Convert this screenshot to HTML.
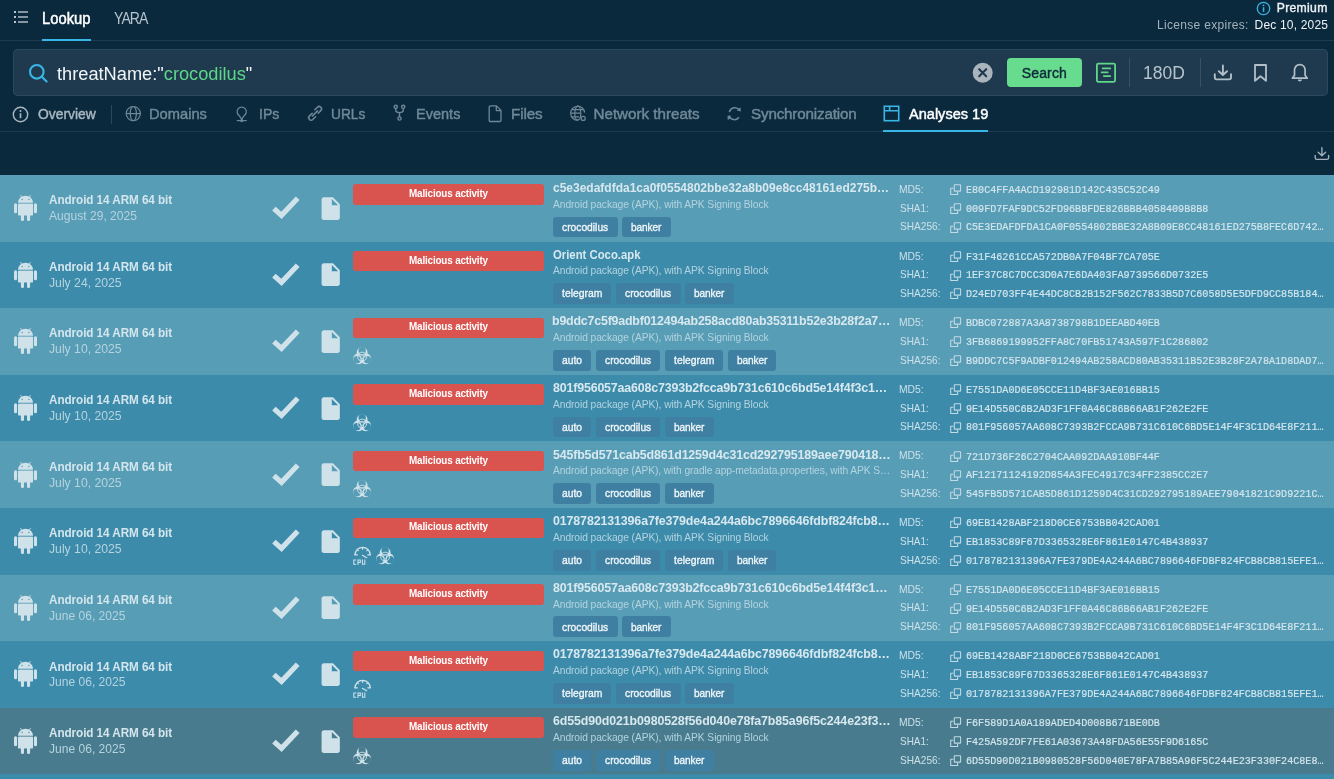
<!DOCTYPE html><html><head><meta charset='utf-8'><style>
html,body{margin:0;padding:0;width:1334px;height:779px;overflow:hidden;background:#0b293d;}
body{position:relative;font-family:'Liberation Sans',sans-serif;}
.t{position:absolute;white-space:pre;}
#w{position:absolute;left:0;top:0;width:1334px;height:779px;will-change:transform;}
svg{overflow:visible}
</style></head><body><div id=w><div style='position:absolute;left:0;top:40px;width:1334px;height:1px;background:#1d3a4e'></div><svg style='position:absolute;left:13px;top:10px' width=16 height=14 viewBox='0 0 16 14'>
<g fill='#b9c6ce'><rect x=1 y=1 width=2 height=2 /><rect x=1 y=6 width=2 height=2 /><rect x=1 y=11 width=2 height=2 />
<rect x=5 y=1.3 width=10 height=1.4 /><rect x=5 y=6.3 width=10 height=1.4 /><rect x=5 y=11.3 width=10 height=1.4 /></g></svg><div class=t style="left:41.60px;top:10.99px;font-size:15.6px;line-height:15.6px;color:#ffffff;-webkit-text-stroke:0.47px currentColor;transform:scaleX(0.948);transform-origin:0 0;">Lookup</div><div class=t style="left:113.80px;top:10.99px;font-size:15.6px;line-height:15.6px;color:#b5c3cc;letter-spacing:-1.037px;transform:scaleX(0.900);transform-origin:0 0;">YARA</div><div style='position:absolute;left:42px;top:39px;width:49px;height:2px;background:#38b6e6'></div><svg style='position:absolute;left:1256px;top:1px' width=15 height=15 viewBox='0 0 15 15'>
<circle cx=7.5 cy=7.5 r=6.2 fill=none stroke='#38b6e6' stroke-width=1.3 /><rect x=6.8 y=6.3 width=1.5 height=4.6 fill='#38b6e6'/><circle cx=7.5 cy=4.4 r=0.9 fill='#38b6e6'/></svg><div class=t style="left:1276.70px;top:1.67px;font-size:12.2px;line-height:12.2px;color:#eef3f6;-webkit-text-stroke:0.37px currentColor;letter-spacing:0.317px;">Premium</div><div class=t style="left:1157.00px;top:19.44px;font-size:12px;line-height:12px;color:#a3b2bc;letter-spacing:0.307px;">License expires:</div><div class=t style="left:1254.60px;top:19.44px;font-size:12px;line-height:12px;color:#eef3f6;letter-spacing:0.182px;">Dec 10, 2025</div><div style='position:absolute;left:13px;top:49px;width:1315px;height:47px;background:#1f3a4f;border-radius:5px;box-shadow:inset 0 0 0 1px #2a4960'></div><svg style='position:absolute;left:27.8px;top:63px' width=21 height=21 viewBox='0 0 21 21'>
<circle cx=8.8 cy=8.8 r=6.8 fill=none stroke='#38b6e6' stroke-width=2.1 /><line x1=13.8 y1=13.8 x2=18.6 y2=18.6 stroke='#38b6e6' stroke-width=2.1 stroke-linecap=round /></svg><div class=t style="left:57.00px;top:65.00px;font-size:18.9px;line-height:18.9px;color:#f2f5f7;transform:scaleX(0.965);transform-origin:0 0;">threatName:"<span style='color:#5fd68a'>crocodilus</span>"</div><svg style='position:absolute;left:972px;top:62px' width=22 height=22 viewBox='0 0 22 22'>
<circle cx=10.7 cy=10.7 r=10 fill='#a9b4bc'/><path d='M7.2 7.2 L14.2 14.2 M14.2 7.2 L7.2 14.2' stroke='#1f3a4f' stroke-width=2.1 stroke-linecap=round /></svg><div style='position:absolute;left:1007px;top:58px;width:75px;height:29px;background:#68dc8e;border-radius:4px'></div><div class=t style="left:1021.70px;top:65.65px;font-size:14px;line-height:14px;color:#0f2b3b;-webkit-text-stroke:0.42px currentColor;letter-spacing:0.160px;">Search</div><svg style='position:absolute;left:1095px;top:62px' width=22 height=22 viewBox='0 0 22 22'>
<rect x=1.9 y=1.6 width=18.2 height=18.2 rx=1.5 fill=none stroke='#5fd68a' stroke-width=1.8 /><path d='M7.6 6.4 H15.3 M6.6 10.3 H12.7 M8.8 14.1 H15.3' stroke='#5fd68a' stroke-width=1.7 stroke-linecap=round /></svg><div style='position:absolute;left:1129px;top:58px;width:1px;height:29px;background:#34506a'></div><div class=t style="left:1142.60px;top:64.20px;font-size:18.9px;line-height:18.9px;color:#b7c3cb;transform:scaleX(0.925);transform-origin:0 0;">180D</div><div style='position:absolute;left:1200px;top:58px;width:1px;height:29px;background:#34506a'></div><svg style='position:absolute;left:1212px;top:64px' width=22 height=19 viewBox='0 0 22 19'>
<path d='M2.8 10.2 V13.6 Q2.8 15.4 4.6 15.4 H17.2 Q19 15.4 19 13.6 V10.2' fill=none stroke='#b2bfc8' stroke-width=1.9 stroke-linecap=round /><path d='M10.9 1.4 V11 M6.8 7.2 L10.9 11 L15 7.2' fill=none stroke='#b2bfc8' stroke-width=1.9 stroke-linecap=round stroke-linejoin=round /></svg><svg style='position:absolute;left:1252px;top:63px' width=17 height=20 viewBox='0 0 17 20'>
<path d='M3 2 H14 V17.8 L8.5 13.2 L3 17.8 Z' fill=none stroke='#b2bfc8' stroke-width=1.8 stroke-linejoin=round /></svg><svg style='position:absolute;left:1290px;top:63px' width=20 height=20 viewBox='0 0 20 20'>
<path d='M9.8 1.6 C6.4 1.6 4.5 4.3 4.5 7.3 V12.3 L2.4 15.2 H17.2 L15.1 12.3 V7.3 C15.1 4.3 13.2 1.6 9.8 1.6 Z' fill=none stroke='#b2bfc8' stroke-width=1.7 stroke-linejoin=round /><path d='M8 17 H11.6 Q9.8 19.4 8 17 Z' fill='#b2bfc8' stroke='#b2bfc8' stroke-width=0.8 /></svg><svg style='position:absolute;left:12px;top:106px' width=18 height=18 viewBox='0 0 18 18'><circle cx=8.5 cy=8.5 r=7.2 fill=none stroke='#aab8c1' stroke-width=1.4 /><rect x=7.7 y=7.2 width=1.6 height=5 fill='#aab8c1'/><circle cx=8.5 cy=5 r=1 fill='#aab8c1'/></svg><div class=t style="left:38.00px;top:106.13px;font-size:15.2px;line-height:15.2px;color:#aab8c1;-webkit-text-stroke:0.46px currentColor;transform:scaleX(0.912);transform-origin:0 0;">Overview</div><div style='position:absolute;left:111px;top:105px;width:1px;height:19px;background:#2c475b'></div><svg style='position:absolute;left:125px;top:105px' width=18 height=18 viewBox='0 0 18 18'><g fill=none stroke='#6f8897' stroke-width=1.2><circle cx=8.3 cy=8.6 r=7.1 /><ellipse cx=8.3 cy=8.6 rx=3.1 ry=7.1 /><path d='M1.2 8.6 H15.4'/></g></svg><div class=t style="left:149.00px;top:106.13px;font-size:15.2px;line-height:15.2px;color:#6f8897;-webkit-text-stroke:0.46px currentColor;transform:scaleX(0.966);transform-origin:0 0;">Domains</div><svg style='position:absolute;left:236px;top:105px' width=12 height=18 viewBox='0 0 12 18'><g fill=none stroke='#6f8897' stroke-width=1.2><path d='M5.7 14.2 L3.2 10.6 A4.6 4.6 0 1 1 8.2 10.6 Z' stroke-linejoin=round /><path d='M0.8 15.6 H10.6'/><circle cx=5.7 cy=15.6 r=1 fill='#6f8897'/></g></svg><div class=t style="left:259.00px;top:106.13px;font-size:15.2px;line-height:15.2px;color:#6f8897;-webkit-text-stroke:0.46px currentColor;transform:scaleX(0.929);transform-origin:0 0;">IPs</div><svg style='position:absolute;left:306px;top:104px' width=18 height=18 viewBox='0 0 18 18'><g fill=none stroke='#6f8897' stroke-width=1.5 stroke-linecap=round><path d='M6.2 9.3 L3.4 12.1 A2.4 2.4 0 0 0 6.8 15.5 L9.6 12.7'/><path d='M8.8 5.8 L11.4 3.2 A2.4 2.4 0 0 1 14.8 6.6 L12.1 9.3'/><path d='M6.5 11.9 L11.5 6.9'/></g></svg><div class=t style="left:330.50px;top:106.13px;font-size:15.2px;line-height:15.2px;color:#6f8897;-webkit-text-stroke:0.46px currentColor;transform:scaleX(0.905);transform-origin:0 0;">URLs</div><svg style='position:absolute;left:393px;top:104px' width=13 height=18 viewBox='0 0 13 18'><g fill=none stroke='#6f8897' stroke-width=1.4><circle cx=2.8 cy=2.8 r=1.6 /><circle cx=10.2 cy=2.8 r=1.6 /><circle cx=6.5 cy=14.5 r=1.6 /><path d='M2.8 4.4 V6.5 Q2.8 8.6 6.5 8.6 Q10.2 8.6 10.2 6.5 V4.4 M6.5 8.6 V12.9'/></g></svg><div class=t style="left:416.00px;top:106.13px;font-size:15.2px;line-height:15.2px;color:#6f8897;-webkit-text-stroke:0.46px currentColor;transform:scaleX(0.956);transform-origin:0 0;">Events</div><svg style='position:absolute;left:488px;top:105px' width=14 height=18 viewBox='0 0 14 18'><path d='M1.2 2.2 Q1.2 0.9 2.5 0.9 H8.5 L13 5.4 V15.2 Q13 16.5 11.7 16.5 H2.5 Q1.2 16.5 1.2 15.2 Z M8.3 1 V5.6 H13' fill=none stroke='#6f8897' stroke-width=1.3 stroke-linejoin=round /></svg><div class=t style="left:511.00px;top:106.13px;font-size:15.2px;line-height:15.2px;color:#6f8897;-webkit-text-stroke:0.46px currentColor;letter-spacing:-0.125px;">Files</div><svg style='position:absolute;left:570px;top:105px' width=18 height=18 viewBox='0 0 18 18'><g fill=none stroke='#6f8897' stroke-width=1.2><path d='M14.6 7.5 A7 7 0 1 0 8 15.2'/><ellipse cx=7.8 cy=8.2 rx=3 ry=7 /><path d='M1 8.2 H10 M1.9 4.6 H13.8 M1.9 11.8 H9'/><circle cx=13.2 cy=13.4 r=2 /></g></svg><div class=t style="left:593.50px;top:106.13px;font-size:15.2px;line-height:15.2px;color:#6f8897;-webkit-text-stroke:0.46px currentColor;letter-spacing:-0.014px;">Network threats</div><svg style='position:absolute;left:727px;top:105px' width=15 height=18 viewBox='0 0 15 18'><g fill=none stroke='#6f8897' stroke-width=1.5><path d='M12.4 5 A5.6 5.6 0 0 0 2.4 7.2'/><path d='M2 10.5 A5.6 5.6 0 0 0 12 12.3'/></g><g fill='#6f8897'><path d='M9.8 5.6 L13.8 6.4 L13.5 2.2 Z'/><path d='M4.5 11.8 L0.5 11 L0.8 15.3 Z'/></g></svg><div class=t style="left:751.00px;top:106.13px;font-size:15.2px;line-height:15.2px;color:#6f8897;-webkit-text-stroke:0.46px currentColor;letter-spacing:-0.171px;">Synchronization</div><svg style='position:absolute;left:883px;top:105px' width=17 height=18 viewBox='0 0 17 18'><g fill=none stroke='#38b6e6' stroke-width=1.6><rect x=1.3 y=1.3 width=14.4 height=14.4 /><path d='M1.3 5.8 H15.7 M6.6 1.3 V5.8'/></g></svg><div class=t style="left:908.50px;top:106.13px;font-size:15.2px;line-height:15.2px;color:#ffffff;-webkit-text-stroke:0.46px currentColor;transform:scaleX(0.958);transform-origin:0 0;">Analyses 19</div><div style='position:absolute;left:0;top:131px;width:1334px;height:1px;background:#1d3a4e'></div><div style='position:absolute;left:883px;top:130px;width:105px;height:2px;background:#38b6e6'></div><svg style='position:absolute;left:1312px;top:145px' width=20 height=17 viewBox='0 0 20 17'>
<path d='M3.2 10.3 V12.7 Q3.2 14.4 4.9 14.4 H14.9 Q16.6 14.4 16.6 12.7 V10.3' fill=none stroke='#a3b3bd' stroke-width=1.35 stroke-linecap=round /><path d='M9.9 2.6 V10.6 M6.2 7.3 L9.9 10.8 L13.6 7.3' fill=none stroke='#a3b3bd' stroke-width=1.35 stroke-linecap=round stroke-linejoin=round /></svg><div style='position:absolute;left:0;top:175px;width:1334px;height:67px;background:#589db6'></div><svg style='position:absolute;left:8px;top:190.00px' width=36 height=36 viewBox='8 190 36 36'><g fill='#cfe2ea'><path d='M18 202.7 A7.5 6.9 0 0 1 33 202.7 Z'/><rect x=18 y=203.8 width=15 height=11.8 rx=1.2 /><rect x=18 y=203.8 width=15 height=6 />
<rect x=14 y=203.2 width=3.1 height=10 rx=1.5 /><rect x=33.9 y=203.2 width=3.1 height=10 rx=1.5 /><rect x=20.9 y=212 width=3.1 height=8.9 rx=1.5 /><rect x=27 y=212 width=3.1 height=8.9 rx=1.5 /></g>
<g stroke='#cfe2ea' stroke-width=0.8 stroke-linecap=round><path d='M20.6 195.3 L21.9 197.6 M30.4 195.3 L29.1 197.6'/></g>
<g fill='#589db6'><circle cx=22.1 cy=199.6 r=0.75 /><circle cx=28.9 cy=199.6 r=0.75 /></g></svg><div class=t style="left:49.00px;top:193.20px;font-size:13px;line-height:13px;color:#d4e6ed;font-weight:700;letter-spacing:-0.067px;transform:scaleX(0.900);transform-origin:0 0;">Android 14 ARM 64 bit</div><div class=t style="left:49.00px;top:209.00px;font-size:13px;line-height:13px;color:#b5d3df;transform:scaleX(0.929);transform-origin:0 0;">August 29, 2025</div><svg style='position:absolute;left:260px;top:175.00px' width=60 height=60 viewBox='260 175 60 60'><path d='M273.9 208.6 L281.5 215.4 L297.7 198.2' fill=none stroke='#cfe2ea' stroke-width=5.2 stroke-linecap=butt stroke-linejoin=miter /></svg><svg style='position:absolute;left:317.1px;top:194.60px' width=27.4 height=27.4 viewBox='0 0 24 24'><path d='M6 2c-1.1 0-1.99.9-1.99 2L4 20c0 1.1.89 2 1.99 2H18c1.1 0 2-.9 2-2V8l-6-6H6zm7 7V3.5L18.5 9H13z' fill='#cfe2ea'/></svg><div style='position:absolute;left:353px;top:184.30px;width:191px;height:20.5px;background:#d9534f;border-radius:3px'></div><div class=t style="left:408.70px;top:188.19px;font-size:11px;line-height:11px;color:#ffffff;font-weight:700;letter-spacing:-0.190px;transform:scaleX(0.900);transform-origin:0 0;">Malicious activity</div><div class=t style="left:553.00px;top:182.00px;font-size:12.4px;line-height:12.4px;color:#d8e8ef;font-weight:700;transform:scaleX(0.968);transform-origin:0 0;">c5e3edafdfda1ca0f0554802bbe32a8b09e8cc48161ed275b…</div><div class=t style="left:553.00px;top:198.75px;font-size:11.4px;line-height:11.4px;color:#b3d3df;letter-spacing:-0.081px;transform:scaleX(0.900);transform-origin:0 0;">Android package (APK), with APK Signing Block</div><div style='position:absolute;left:553px;top:216.60px;width:64.8px;height:20.8px;background:#3f80a2;border-radius:3px'></div><div class=t style="left:562.00px;top:221.72px;font-size:11.2px;line-height:11.2px;color:#f0f6f9;-webkit-text-stroke:0.34px currentColor;transform:scaleX(0.918);transform-origin:0 0;">crocodilus</div><div style='position:absolute;left:622.4px;top:216.60px;width:48.6px;height:20.8px;background:#3f80a2;border-radius:3px'></div><div class=t style="left:631.20px;top:221.72px;font-size:11.2px;line-height:11.2px;color:#f0f6f9;-webkit-text-stroke:0.34px currentColor;letter-spacing:-0.111px;transform:scaleX(0.900);transform-origin:0 0;">banker</div><div class=t style="left:899.00px;top:183.89px;font-size:11px;line-height:11px;color:#cce0e9;transform:scaleX(0.940);transform-origin:0 0;">MD5:</div><svg style='position:absolute;left:949px;top:183.2px' width=13 height=13 viewBox='0 0 13 13'>
<g fill=none stroke='#c3d9e3' stroke-width=1.05><path d='M4.4 5.2 H1.7 V11.5 H8.6 V8.9' stroke-linejoin=round /><rect x=5.3 y=1.8 width=6.3 height=6.3 rx=0.4 /></g></svg><div class=t style="left:966.00px;top:184.99px;font-size:11.8px;line-height:11.8px;color:#d3e5ec;font-family:'Liberation Mono',monospace;transform:scaleX(0.856);transform-origin:0 0;-webkit-text-stroke:0.2px currentColor;">E80C4FFA4ACD192981D142C435C52C49</div><div class=t style="left:900.00px;top:202.64px;font-size:11px;line-height:11px;color:#cce0e9;transform:scaleX(0.903);transform-origin:0 0;">SHA1:</div><svg style='position:absolute;left:949px;top:201.95px' width=13 height=13 viewBox='0 0 13 13'>
<g fill=none stroke='#c3d9e3' stroke-width=1.05><path d='M4.4 5.2 H1.7 V11.5 H8.6 V8.9' stroke-linejoin=round /><rect x=5.3 y=1.8 width=6.3 height=6.3 rx=0.4 /></g></svg><div class=t style="left:966.00px;top:203.74px;font-size:11.8px;line-height:11.8px;color:#d3e5ec;font-family:'Liberation Mono',monospace;transform:scaleX(0.856);transform-origin:0 0;-webkit-text-stroke:0.2px currentColor;">009FD7FAF9DC52FD96BBFDE826BBB4058409B8B8</div><div class=t style="left:900.00px;top:221.39px;font-size:11px;line-height:11px;color:#cce0e9;transform:scaleX(0.919);transform-origin:0 0;">SHA256:</div><svg style='position:absolute;left:949px;top:220.7px' width=13 height=13 viewBox='0 0 13 13'>
<g fill=none stroke='#c3d9e3' stroke-width=1.05><path d='M4.4 5.2 H1.7 V11.5 H8.6 V8.9' stroke-linejoin=round /><rect x=5.3 y=1.8 width=6.3 height=6.3 rx=0.4 /></g></svg><div class=t style="left:966.00px;top:222.49px;font-size:11.8px;line-height:11.8px;color:#d3e5ec;font-family:'Liberation Mono',monospace;transform:scaleX(0.856);transform-origin:0 0;-webkit-text-stroke:0.2px currentColor;">C5E3EDAFDFDA1CA0F0554802BBE32A8B09E8CC48161ED275B8FEC6D742…</div><div style='position:absolute;left:0;top:242px;width:1334px;height:66px;background:#3c8bab'></div><svg style='position:absolute;left:8px;top:256.64px' width=36 height=36 viewBox='8 190 36 36'><g fill='#cfe2ea'><path d='M18 202.7 A7.5 6.9 0 0 1 33 202.7 Z'/><rect x=18 y=203.8 width=15 height=11.8 rx=1.2 /><rect x=18 y=203.8 width=15 height=6 />
<rect x=14 y=203.2 width=3.1 height=10 rx=1.5 /><rect x=33.9 y=203.2 width=3.1 height=10 rx=1.5 /><rect x=20.9 y=212 width=3.1 height=8.9 rx=1.5 /><rect x=27 y=212 width=3.1 height=8.9 rx=1.5 /></g>
<g stroke='#cfe2ea' stroke-width=0.8 stroke-linecap=round><path d='M20.6 195.3 L21.9 197.6 M30.4 195.3 L29.1 197.6'/></g>
<g fill='#589db6'><circle cx=22.1 cy=199.6 r=0.75 /><circle cx=28.9 cy=199.6 r=0.75 /></g></svg><div class=t style="left:49.00px;top:259.84px;font-size:13px;line-height:13px;color:#d4e6ed;font-weight:700;letter-spacing:-0.067px;transform:scaleX(0.900);transform-origin:0 0;">Android 14 ARM 64 bit</div><div class=t style="left:49.00px;top:275.64px;font-size:13px;line-height:13px;color:#b5d3df;transform:scaleX(0.939);transform-origin:0 0;">July 24, 2025</div><svg style='position:absolute;left:260px;top:241.64px' width=60 height=60 viewBox='260 175 60 60'><path d='M273.9 208.6 L281.5 215.4 L297.7 198.2' fill=none stroke='#cfe2ea' stroke-width=5.2 stroke-linecap=butt stroke-linejoin=miter /></svg><svg style='position:absolute;left:317.1px;top:261.24px' width=27.4 height=27.4 viewBox='0 0 24 24'><path d='M6 2c-1.1 0-1.99.9-1.99 2L4 20c0 1.1.89 2 1.99 2H18c1.1 0 2-.9 2-2V8l-6-6H6zm7 7V3.5L18.5 9H13z' fill='#cfe2ea'/></svg><div style='position:absolute;left:353px;top:250.94px;width:191px;height:20.5px;background:#d9534f;border-radius:3px'></div><div class=t style="left:408.70px;top:254.83px;font-size:11px;line-height:11px;color:#ffffff;font-weight:700;letter-spacing:-0.190px;transform:scaleX(0.900);transform-origin:0 0;">Malicious activity</div><div class=t style="left:553.00px;top:248.64px;font-size:12.4px;line-height:12.4px;color:#d8e8ef;font-weight:700;transform:scaleX(0.914);transform-origin:0 0;">Orient Coco.apk</div><div class=t style="left:553.00px;top:265.39px;font-size:11.4px;line-height:11.4px;color:#b3d3df;letter-spacing:-0.081px;transform:scaleX(0.900);transform-origin:0 0;">Android package (APK), with APK Signing Block</div><div style='position:absolute;left:553px;top:283.24px;width:58.2px;height:20.8px;background:#3f80a2;border-radius:3px'></div><div class=t style="left:562.20px;top:288.36px;font-size:11.2px;line-height:11.2px;color:#f0f6f9;-webkit-text-stroke:0.34px currentColor;transform:scaleX(0.926);transform-origin:0 0;">telegram</div><div style='position:absolute;left:615.8px;top:283.24px;width:64.8px;height:20.8px;background:#3f80a2;border-radius:3px'></div><div class=t style="left:624.80px;top:288.36px;font-size:11.2px;line-height:11.2px;color:#f0f6f9;-webkit-text-stroke:0.34px currentColor;transform:scaleX(0.918);transform-origin:0 0;">crocodilus</div><div style='position:absolute;left:685.1999999999999px;top:283.24px;width:48.6px;height:20.8px;background:#3f80a2;border-radius:3px'></div><div class=t style="left:694.00px;top:288.36px;font-size:11.2px;line-height:11.2px;color:#f0f6f9;-webkit-text-stroke:0.34px currentColor;letter-spacing:-0.111px;transform:scaleX(0.900);transform-origin:0 0;">banker</div><div class=t style="left:899.00px;top:250.53px;font-size:11px;line-height:11px;color:#cce0e9;transform:scaleX(0.940);transform-origin:0 0;">MD5:</div><svg style='position:absolute;left:949px;top:249.84px' width=13 height=13 viewBox='0 0 13 13'>
<g fill=none stroke='#c3d9e3' stroke-width=1.05><path d='M4.4 5.2 H1.7 V11.5 H8.6 V8.9' stroke-linejoin=round /><rect x=5.3 y=1.8 width=6.3 height=6.3 rx=0.4 /></g></svg><div class=t style="left:966.00px;top:251.63px;font-size:11.8px;line-height:11.8px;color:#d3e5ec;font-family:'Liberation Mono',monospace;transform:scaleX(0.856);transform-origin:0 0;-webkit-text-stroke:0.2px currentColor;">F31F46261CCA572DB0A7F04BF7CA705E</div><div class=t style="left:900.00px;top:269.28px;font-size:11px;line-height:11px;color:#cce0e9;transform:scaleX(0.903);transform-origin:0 0;">SHA1:</div><svg style='position:absolute;left:949px;top:268.59px' width=13 height=13 viewBox='0 0 13 13'>
<g fill=none stroke='#c3d9e3' stroke-width=1.05><path d='M4.4 5.2 H1.7 V11.5 H8.6 V8.9' stroke-linejoin=round /><rect x=5.3 y=1.8 width=6.3 height=6.3 rx=0.4 /></g></svg><div class=t style="left:966.00px;top:270.38px;font-size:11.8px;line-height:11.8px;color:#d3e5ec;font-family:'Liberation Mono',monospace;transform:scaleX(0.856);transform-origin:0 0;-webkit-text-stroke:0.2px currentColor;">1EF37C8C7DCC3D0A7E6DA403FA9739566D0732E5</div><div class=t style="left:900.00px;top:288.03px;font-size:11px;line-height:11px;color:#cce0e9;transform:scaleX(0.919);transform-origin:0 0;">SHA256:</div><svg style='position:absolute;left:949px;top:287.34px' width=13 height=13 viewBox='0 0 13 13'>
<g fill=none stroke='#c3d9e3' stroke-width=1.05><path d='M4.4 5.2 H1.7 V11.5 H8.6 V8.9' stroke-linejoin=round /><rect x=5.3 y=1.8 width=6.3 height=6.3 rx=0.4 /></g></svg><div class=t style="left:966.00px;top:289.13px;font-size:11.8px;line-height:11.8px;color:#d3e5ec;font-family:'Liberation Mono',monospace;transform:scaleX(0.856);transform-origin:0 0;-webkit-text-stroke:0.2px currentColor;">D24ED703FF4E44DC8CB2B152F562C7833B5D7C6058D5E5DFD9CC85B184…</div><div style='position:absolute;left:0;top:308px;width:1334px;height:67px;background:#589db6'></div><svg style='position:absolute;left:8px;top:323.28px' width=36 height=36 viewBox='8 190 36 36'><g fill='#cfe2ea'><path d='M18 202.7 A7.5 6.9 0 0 1 33 202.7 Z'/><rect x=18 y=203.8 width=15 height=11.8 rx=1.2 /><rect x=18 y=203.8 width=15 height=6 />
<rect x=14 y=203.2 width=3.1 height=10 rx=1.5 /><rect x=33.9 y=203.2 width=3.1 height=10 rx=1.5 /><rect x=20.9 y=212 width=3.1 height=8.9 rx=1.5 /><rect x=27 y=212 width=3.1 height=8.9 rx=1.5 /></g>
<g stroke='#cfe2ea' stroke-width=0.8 stroke-linecap=round><path d='M20.6 195.3 L21.9 197.6 M30.4 195.3 L29.1 197.6'/></g>
<g fill='#589db6'><circle cx=22.1 cy=199.6 r=0.75 /><circle cx=28.9 cy=199.6 r=0.75 /></g></svg><div class=t style="left:49.00px;top:326.48px;font-size:13px;line-height:13px;color:#d4e6ed;font-weight:700;letter-spacing:-0.067px;transform:scaleX(0.900);transform-origin:0 0;">Android 14 ARM 64 bit</div><div class=t style="left:49.00px;top:342.28px;font-size:13px;line-height:13px;color:#b5d3df;transform:scaleX(0.939);transform-origin:0 0;">July 10, 2025</div><svg style='position:absolute;left:260px;top:308.28px' width=60 height=60 viewBox='260 175 60 60'><path d='M273.9 208.6 L281.5 215.4 L297.7 198.2' fill=none stroke='#cfe2ea' stroke-width=5.2 stroke-linecap=butt stroke-linejoin=miter /></svg><svg style='position:absolute;left:317.1px;top:327.88px' width=27.4 height=27.4 viewBox='0 0 24 24'><path d='M6 2c-1.1 0-1.99.9-1.99 2L4 20c0 1.1.89 2 1.99 2H18c1.1 0 2-.9 2-2V8l-6-6H6zm7 7V3.5L18.5 9H13z' fill='#cfe2ea'/></svg><div style='position:absolute;left:353px;top:317.58px;width:191px;height:20.5px;background:#d9534f;border-radius:3px'></div><div class=t style="left:408.70px;top:321.47px;font-size:11px;line-height:11px;color:#ffffff;font-weight:700;letter-spacing:-0.190px;transform:scaleX(0.900);transform-origin:0 0;">Malicious activity</div><svg style='position:absolute;left:352.77px;top:347.01px' width='18.25' height='17.34' viewBox='-25 -26.5 50 47.5'>
<defs><mask id='bio1' maskUnits='userSpaceOnUse' x='-30' y='-30' width='60' height='60'><rect x='-30' y='-30' width='60' height='60' fill='white' /><circle cx='0.00' cy='-16.50' r='10' fill='black' /><circle cx='14.29' cy='8.25' r='10' fill='black' /><circle cx='-14.29' cy='8.25' r='10' fill='black' /><circle cx='0' cy='0' r='3' fill='black' /><line x1='0' y1='0' x2='0.00' y2='9.00' stroke='black' stroke-width='1.6' /><line x1='0' y1='0' x2='-7.79' y2='-4.50' stroke='black' stroke-width='1.6' /><line x1='0' y1='0' x2='7.79' y2='-4.50' stroke='black' stroke-width='1.6' /></mask>
<mask id='bio1r' maskUnits='userSpaceOnUse' x='-30' y='-30' width='60' height='60'><rect x='-30' y='-30' width='60' height='60' fill='white' /><circle cx='0' cy='0' r='3' fill='black' /><line x1='0' y1='0' x2='0.00' y2='9.00' stroke='black' stroke-width='1.6' /><line x1='0' y1='0' x2='-7.79' y2='-4.50' stroke='black' stroke-width='1.6' /><line x1='0' y1='0' x2='7.79' y2='-4.50' stroke='black' stroke-width='1.6' /></mask></defs>
<g fill='#cfe2ea' mask='url(#bio1)'><circle cx='0.00' cy='-11.00' r='15' /><circle cx='9.53' cy='5.50' r='15' /><circle cx='-9.53' cy='5.50' r='15' /></g>
<circle cx='0' cy='0' r='12.3' fill='none' stroke='#cfe2ea' stroke-width='2.6' mask='url(#bio1r)' /></svg><div class=t style="left:552.00px;top:315.28px;font-size:12.4px;line-height:12.4px;color:#d8e8ef;font-weight:700;letter-spacing:-0.192px;">b9ddc7c5f9adbf012494ab258acd80ab35311b52e3b28f2a7…</div><div class=t style="left:553.00px;top:332.03px;font-size:11.4px;line-height:11.4px;color:#b3d3df;letter-spacing:-0.081px;transform:scaleX(0.900);transform-origin:0 0;">Android package (APK), with APK Signing Block</div><div style='position:absolute;left:553px;top:349.88px;width:38px;height:20.8px;background:#3f80a2;border-radius:3px'></div><div class=t style="left:561.90px;top:355.00px;font-size:11.2px;line-height:11.2px;color:#f0f6f9;-webkit-text-stroke:0.34px currentColor;transform:scaleX(0.918);transform-origin:0 0;">auto</div><div style='position:absolute;left:595.6px;top:349.88px;width:64.8px;height:20.8px;background:#3f80a2;border-radius:3px'></div><div class=t style="left:604.60px;top:355.00px;font-size:11.2px;line-height:11.2px;color:#f0f6f9;-webkit-text-stroke:0.34px currentColor;transform:scaleX(0.918);transform-origin:0 0;">crocodilus</div><div style='position:absolute;left:665.0px;top:349.88px;width:58.2px;height:20.8px;background:#3f80a2;border-radius:3px'></div><div class=t style="left:674.20px;top:355.00px;font-size:11.2px;line-height:11.2px;color:#f0f6f9;-webkit-text-stroke:0.34px currentColor;transform:scaleX(0.926);transform-origin:0 0;">telegram</div><div style='position:absolute;left:727.8px;top:349.88px;width:48.6px;height:20.8px;background:#3f80a2;border-radius:3px'></div><div class=t style="left:736.60px;top:355.00px;font-size:11.2px;line-height:11.2px;color:#f0f6f9;-webkit-text-stroke:0.34px currentColor;letter-spacing:-0.111px;transform:scaleX(0.900);transform-origin:0 0;">banker</div><div class=t style="left:899.00px;top:317.17px;font-size:11px;line-height:11px;color:#cce0e9;transform:scaleX(0.940);transform-origin:0 0;">MD5:</div><svg style='position:absolute;left:949px;top:316.48px' width=13 height=13 viewBox='0 0 13 13'>
<g fill=none stroke='#c3d9e3' stroke-width=1.05><path d='M4.4 5.2 H1.7 V11.5 H8.6 V8.9' stroke-linejoin=round /><rect x=5.3 y=1.8 width=6.3 height=6.3 rx=0.4 /></g></svg><div class=t style="left:966.00px;top:318.27px;font-size:11.8px;line-height:11.8px;color:#d3e5ec;font-family:'Liberation Mono',monospace;transform:scaleX(0.856);transform-origin:0 0;-webkit-text-stroke:0.2px currentColor;">BDBC072887A3A8738798B1DEEABD40EB</div><div class=t style="left:900.00px;top:335.92px;font-size:11px;line-height:11px;color:#cce0e9;transform:scaleX(0.903);transform-origin:0 0;">SHA1:</div><svg style='position:absolute;left:949px;top:335.23px' width=13 height=13 viewBox='0 0 13 13'>
<g fill=none stroke='#c3d9e3' stroke-width=1.05><path d='M4.4 5.2 H1.7 V11.5 H8.6 V8.9' stroke-linejoin=round /><rect x=5.3 y=1.8 width=6.3 height=6.3 rx=0.4 /></g></svg><div class=t style="left:966.00px;top:337.02px;font-size:11.8px;line-height:11.8px;color:#d3e5ec;font-family:'Liberation Mono',monospace;transform:scaleX(0.856);transform-origin:0 0;-webkit-text-stroke:0.2px currentColor;">3FB6869199952FFA8C70FB51743A597F1C286802</div><div class=t style="left:900.00px;top:354.67px;font-size:11px;line-height:11px;color:#cce0e9;transform:scaleX(0.919);transform-origin:0 0;">SHA256:</div><svg style='position:absolute;left:949px;top:353.98px' width=13 height=13 viewBox='0 0 13 13'>
<g fill=none stroke='#c3d9e3' stroke-width=1.05><path d='M4.4 5.2 H1.7 V11.5 H8.6 V8.9' stroke-linejoin=round /><rect x=5.3 y=1.8 width=6.3 height=6.3 rx=0.4 /></g></svg><div class=t style="left:966.00px;top:355.77px;font-size:11.8px;line-height:11.8px;color:#d3e5ec;font-family:'Liberation Mono',monospace;transform:scaleX(0.856);transform-origin:0 0;-webkit-text-stroke:0.2px currentColor;">B9DDC7C5F9ADBF012494AB258ACD80AB35311B52E3B28F2A78A1D8DAD7…</div><div style='position:absolute;left:0;top:375px;width:1334px;height:66px;background:#3c8bab'></div><svg style='position:absolute;left:8px;top:389.92px' width=36 height=36 viewBox='8 190 36 36'><g fill='#cfe2ea'><path d='M18 202.7 A7.5 6.9 0 0 1 33 202.7 Z'/><rect x=18 y=203.8 width=15 height=11.8 rx=1.2 /><rect x=18 y=203.8 width=15 height=6 />
<rect x=14 y=203.2 width=3.1 height=10 rx=1.5 /><rect x=33.9 y=203.2 width=3.1 height=10 rx=1.5 /><rect x=20.9 y=212 width=3.1 height=8.9 rx=1.5 /><rect x=27 y=212 width=3.1 height=8.9 rx=1.5 /></g>
<g stroke='#cfe2ea' stroke-width=0.8 stroke-linecap=round><path d='M20.6 195.3 L21.9 197.6 M30.4 195.3 L29.1 197.6'/></g>
<g fill='#589db6'><circle cx=22.1 cy=199.6 r=0.75 /><circle cx=28.9 cy=199.6 r=0.75 /></g></svg><div class=t style="left:49.00px;top:393.12px;font-size:13px;line-height:13px;color:#d4e6ed;font-weight:700;letter-spacing:-0.067px;transform:scaleX(0.900);transform-origin:0 0;">Android 14 ARM 64 bit</div><div class=t style="left:49.00px;top:408.92px;font-size:13px;line-height:13px;color:#b5d3df;transform:scaleX(0.939);transform-origin:0 0;">July 10, 2025</div><svg style='position:absolute;left:260px;top:374.92px' width=60 height=60 viewBox='260 175 60 60'><path d='M273.9 208.6 L281.5 215.4 L297.7 198.2' fill=none stroke='#cfe2ea' stroke-width=5.2 stroke-linecap=butt stroke-linejoin=miter /></svg><svg style='position:absolute;left:317.1px;top:394.52px' width=27.4 height=27.4 viewBox='0 0 24 24'><path d='M6 2c-1.1 0-1.99.9-1.99 2L4 20c0 1.1.89 2 1.99 2H18c1.1 0 2-.9 2-2V8l-6-6H6zm7 7V3.5L18.5 9H13z' fill='#cfe2ea'/></svg><div style='position:absolute;left:353px;top:384.22px;width:191px;height:20.5px;background:#d9534f;border-radius:3px'></div><div class=t style="left:408.70px;top:388.11px;font-size:11px;line-height:11px;color:#ffffff;font-weight:700;letter-spacing:-0.190px;transform:scaleX(0.900);transform-origin:0 0;">Malicious activity</div><svg style='position:absolute;left:352.77px;top:413.65px' width='18.25' height='17.34' viewBox='-25 -26.5 50 47.5'>
<defs><mask id='bio2' maskUnits='userSpaceOnUse' x='-30' y='-30' width='60' height='60'><rect x='-30' y='-30' width='60' height='60' fill='white' /><circle cx='0.00' cy='-16.50' r='10' fill='black' /><circle cx='14.29' cy='8.25' r='10' fill='black' /><circle cx='-14.29' cy='8.25' r='10' fill='black' /><circle cx='0' cy='0' r='3' fill='black' /><line x1='0' y1='0' x2='0.00' y2='9.00' stroke='black' stroke-width='1.6' /><line x1='0' y1='0' x2='-7.79' y2='-4.50' stroke='black' stroke-width='1.6' /><line x1='0' y1='0' x2='7.79' y2='-4.50' stroke='black' stroke-width='1.6' /></mask>
<mask id='bio2r' maskUnits='userSpaceOnUse' x='-30' y='-30' width='60' height='60'><rect x='-30' y='-30' width='60' height='60' fill='white' /><circle cx='0' cy='0' r='3' fill='black' /><line x1='0' y1='0' x2='0.00' y2='9.00' stroke='black' stroke-width='1.6' /><line x1='0' y1='0' x2='-7.79' y2='-4.50' stroke='black' stroke-width='1.6' /><line x1='0' y1='0' x2='7.79' y2='-4.50' stroke='black' stroke-width='1.6' /></mask></defs>
<g fill='#cfe2ea' mask='url(#bio2)'><circle cx='0.00' cy='-11.00' r='15' /><circle cx='9.53' cy='5.50' r='15' /><circle cx='-9.53' cy='5.50' r='15' /></g>
<circle cx='0' cy='0' r='12.3' fill='none' stroke='#cfe2ea' stroke-width='2.6' mask='url(#bio2r)' /></svg><div class=t style="left:553.00px;top:381.92px;font-size:12.4px;line-height:12.4px;color:#d8e8ef;font-weight:700;letter-spacing:-0.155px;">801f956057aa608c7393b2fcca9b731c610c6bd5e14f4f3c1…</div><div class=t style="left:553.00px;top:398.67px;font-size:11.4px;line-height:11.4px;color:#b3d3df;letter-spacing:-0.081px;transform:scaleX(0.900);transform-origin:0 0;">Android package (APK), with APK Signing Block</div><div style='position:absolute;left:553px;top:416.52px;width:38px;height:20.8px;background:#3f80a2;border-radius:3px'></div><div class=t style="left:561.90px;top:421.64px;font-size:11.2px;line-height:11.2px;color:#f0f6f9;-webkit-text-stroke:0.34px currentColor;transform:scaleX(0.918);transform-origin:0 0;">auto</div><div style='position:absolute;left:595.6px;top:416.52px;width:64.8px;height:20.8px;background:#3f80a2;border-radius:3px'></div><div class=t style="left:604.60px;top:421.64px;font-size:11.2px;line-height:11.2px;color:#f0f6f9;-webkit-text-stroke:0.34px currentColor;transform:scaleX(0.918);transform-origin:0 0;">crocodilus</div><div style='position:absolute;left:665.0px;top:416.52px;width:48.6px;height:20.8px;background:#3f80a2;border-radius:3px'></div><div class=t style="left:673.80px;top:421.64px;font-size:11.2px;line-height:11.2px;color:#f0f6f9;-webkit-text-stroke:0.34px currentColor;letter-spacing:-0.111px;transform:scaleX(0.900);transform-origin:0 0;">banker</div><div class=t style="left:899.00px;top:383.81px;font-size:11px;line-height:11px;color:#cce0e9;transform:scaleX(0.940);transform-origin:0 0;">MD5:</div><svg style='position:absolute;left:949px;top:383.12px' width=13 height=13 viewBox='0 0 13 13'>
<g fill=none stroke='#c3d9e3' stroke-width=1.05><path d='M4.4 5.2 H1.7 V11.5 H8.6 V8.9' stroke-linejoin=round /><rect x=5.3 y=1.8 width=6.3 height=6.3 rx=0.4 /></g></svg><div class=t style="left:966.00px;top:384.91px;font-size:11.8px;line-height:11.8px;color:#d3e5ec;font-family:'Liberation Mono',monospace;transform:scaleX(0.856);transform-origin:0 0;-webkit-text-stroke:0.2px currentColor;">E7551DA0D6E05CCE11D4BF3AE016BB15</div><div class=t style="left:900.00px;top:402.56px;font-size:11px;line-height:11px;color:#cce0e9;transform:scaleX(0.903);transform-origin:0 0;">SHA1:</div><svg style='position:absolute;left:949px;top:401.87px' width=13 height=13 viewBox='0 0 13 13'>
<g fill=none stroke='#c3d9e3' stroke-width=1.05><path d='M4.4 5.2 H1.7 V11.5 H8.6 V8.9' stroke-linejoin=round /><rect x=5.3 y=1.8 width=6.3 height=6.3 rx=0.4 /></g></svg><div class=t style="left:966.00px;top:403.66px;font-size:11.8px;line-height:11.8px;color:#d3e5ec;font-family:'Liberation Mono',monospace;transform:scaleX(0.856);transform-origin:0 0;-webkit-text-stroke:0.2px currentColor;">9E14D550C6B2AD3F1FF0A46C86B66AB1F262E2FE</div><div class=t style="left:900.00px;top:421.31px;font-size:11px;line-height:11px;color:#cce0e9;transform:scaleX(0.919);transform-origin:0 0;">SHA256:</div><svg style='position:absolute;left:949px;top:420.62px' width=13 height=13 viewBox='0 0 13 13'>
<g fill=none stroke='#c3d9e3' stroke-width=1.05><path d='M4.4 5.2 H1.7 V11.5 H8.6 V8.9' stroke-linejoin=round /><rect x=5.3 y=1.8 width=6.3 height=6.3 rx=0.4 /></g></svg><div class=t style="left:966.00px;top:422.41px;font-size:11.8px;line-height:11.8px;color:#d3e5ec;font-family:'Liberation Mono',monospace;transform:scaleX(0.856);transform-origin:0 0;-webkit-text-stroke:0.2px currentColor;">801F956057AA608C7393B2FCCA9B731C610C6BD5E14F4F3C1D64E8F211…</div><div style='position:absolute;left:0;top:441px;width:1334px;height:67px;background:#589db6'></div><svg style='position:absolute;left:8px;top:456.56px' width=36 height=36 viewBox='8 190 36 36'><g fill='#cfe2ea'><path d='M18 202.7 A7.5 6.9 0 0 1 33 202.7 Z'/><rect x=18 y=203.8 width=15 height=11.8 rx=1.2 /><rect x=18 y=203.8 width=15 height=6 />
<rect x=14 y=203.2 width=3.1 height=10 rx=1.5 /><rect x=33.9 y=203.2 width=3.1 height=10 rx=1.5 /><rect x=20.9 y=212 width=3.1 height=8.9 rx=1.5 /><rect x=27 y=212 width=3.1 height=8.9 rx=1.5 /></g>
<g stroke='#cfe2ea' stroke-width=0.8 stroke-linecap=round><path d='M20.6 195.3 L21.9 197.6 M30.4 195.3 L29.1 197.6'/></g>
<g fill='#589db6'><circle cx=22.1 cy=199.6 r=0.75 /><circle cx=28.9 cy=199.6 r=0.75 /></g></svg><div class=t style="left:49.00px;top:459.76px;font-size:13px;line-height:13px;color:#d4e6ed;font-weight:700;letter-spacing:-0.067px;transform:scaleX(0.900);transform-origin:0 0;">Android 14 ARM 64 bit</div><div class=t style="left:49.00px;top:475.56px;font-size:13px;line-height:13px;color:#b5d3df;transform:scaleX(0.939);transform-origin:0 0;">July 10, 2025</div><svg style='position:absolute;left:260px;top:441.56px' width=60 height=60 viewBox='260 175 60 60'><path d='M273.9 208.6 L281.5 215.4 L297.7 198.2' fill=none stroke='#cfe2ea' stroke-width=5.2 stroke-linecap=butt stroke-linejoin=miter /></svg><svg style='position:absolute;left:317.1px;top:461.16px' width=27.4 height=27.4 viewBox='0 0 24 24'><path d='M6 2c-1.1 0-1.99.9-1.99 2L4 20c0 1.1.89 2 1.99 2H18c1.1 0 2-.9 2-2V8l-6-6H6zm7 7V3.5L18.5 9H13z' fill='#cfe2ea'/></svg><div style='position:absolute;left:353px;top:450.86px;width:191px;height:20.5px;background:#d9534f;border-radius:3px'></div><div class=t style="left:408.70px;top:454.75px;font-size:11px;line-height:11px;color:#ffffff;font-weight:700;letter-spacing:-0.190px;transform:scaleX(0.900);transform-origin:0 0;">Malicious activity</div><svg style='position:absolute;left:352.77px;top:480.29px' width='18.25' height='17.34' viewBox='-25 -26.5 50 47.5'>
<defs><mask id='bio3' maskUnits='userSpaceOnUse' x='-30' y='-30' width='60' height='60'><rect x='-30' y='-30' width='60' height='60' fill='white' /><circle cx='0.00' cy='-16.50' r='10' fill='black' /><circle cx='14.29' cy='8.25' r='10' fill='black' /><circle cx='-14.29' cy='8.25' r='10' fill='black' /><circle cx='0' cy='0' r='3' fill='black' /><line x1='0' y1='0' x2='0.00' y2='9.00' stroke='black' stroke-width='1.6' /><line x1='0' y1='0' x2='-7.79' y2='-4.50' stroke='black' stroke-width='1.6' /><line x1='0' y1='0' x2='7.79' y2='-4.50' stroke='black' stroke-width='1.6' /></mask>
<mask id='bio3r' maskUnits='userSpaceOnUse' x='-30' y='-30' width='60' height='60'><rect x='-30' y='-30' width='60' height='60' fill='white' /><circle cx='0' cy='0' r='3' fill='black' /><line x1='0' y1='0' x2='0.00' y2='9.00' stroke='black' stroke-width='1.6' /><line x1='0' y1='0' x2='-7.79' y2='-4.50' stroke='black' stroke-width='1.6' /><line x1='0' y1='0' x2='7.79' y2='-4.50' stroke='black' stroke-width='1.6' /></mask></defs>
<g fill='#cfe2ea' mask='url(#bio3)'><circle cx='0.00' cy='-11.00' r='15' /><circle cx='9.53' cy='5.50' r='15' /><circle cx='-9.53' cy='5.50' r='15' /></g>
<circle cx='0' cy='0' r='12.3' fill='none' stroke='#cfe2ea' stroke-width='2.6' mask='url(#bio3r)' /></svg><div class=t style="left:553.00px;top:448.56px;font-size:12.4px;line-height:12.4px;color:#d8e8ef;font-weight:700;letter-spacing:-0.154px;">545fb5d571cab5d861d1259d4c31cd292795189aee790418…</div><div class=t style="left:553.00px;top:465.31px;font-size:11.4px;line-height:11.4px;color:#b3d3df;letter-spacing:-0.100px;transform:scaleX(0.900);transform-origin:0 0;">Android package (APK), with gradle app-metadata.properties, with APK S…</div><div style='position:absolute;left:553px;top:483.16px;width:38px;height:20.8px;background:#3f80a2;border-radius:3px'></div><div class=t style="left:561.90px;top:488.28px;font-size:11.2px;line-height:11.2px;color:#f0f6f9;-webkit-text-stroke:0.34px currentColor;transform:scaleX(0.918);transform-origin:0 0;">auto</div><div style='position:absolute;left:595.6px;top:483.16px;width:64.8px;height:20.8px;background:#3f80a2;border-radius:3px'></div><div class=t style="left:604.60px;top:488.28px;font-size:11.2px;line-height:11.2px;color:#f0f6f9;-webkit-text-stroke:0.34px currentColor;transform:scaleX(0.918);transform-origin:0 0;">crocodilus</div><div style='position:absolute;left:665.0px;top:483.16px;width:48.6px;height:20.8px;background:#3f80a2;border-radius:3px'></div><div class=t style="left:673.80px;top:488.28px;font-size:11.2px;line-height:11.2px;color:#f0f6f9;-webkit-text-stroke:0.34px currentColor;letter-spacing:-0.111px;transform:scaleX(0.900);transform-origin:0 0;">banker</div><div class=t style="left:899.00px;top:450.45px;font-size:11px;line-height:11px;color:#cce0e9;transform:scaleX(0.940);transform-origin:0 0;">MD5:</div><svg style='position:absolute;left:949px;top:449.76px' width=13 height=13 viewBox='0 0 13 13'>
<g fill=none stroke='#c3d9e3' stroke-width=1.05><path d='M4.4 5.2 H1.7 V11.5 H8.6 V8.9' stroke-linejoin=round /><rect x=5.3 y=1.8 width=6.3 height=6.3 rx=0.4 /></g></svg><div class=t style="left:966.00px;top:451.55px;font-size:11.8px;line-height:11.8px;color:#d3e5ec;font-family:'Liberation Mono',monospace;transform:scaleX(0.856);transform-origin:0 0;-webkit-text-stroke:0.2px currentColor;">721D736F26C2704CAA092DAA910BF44F</div><div class=t style="left:900.00px;top:469.20px;font-size:11px;line-height:11px;color:#cce0e9;transform:scaleX(0.903);transform-origin:0 0;">SHA1:</div><svg style='position:absolute;left:949px;top:468.51px' width=13 height=13 viewBox='0 0 13 13'>
<g fill=none stroke='#c3d9e3' stroke-width=1.05><path d='M4.4 5.2 H1.7 V11.5 H8.6 V8.9' stroke-linejoin=round /><rect x=5.3 y=1.8 width=6.3 height=6.3 rx=0.4 /></g></svg><div class=t style="left:966.00px;top:470.30px;font-size:11.8px;line-height:11.8px;color:#d3e5ec;font-family:'Liberation Mono',monospace;transform:scaleX(0.856);transform-origin:0 0;-webkit-text-stroke:0.2px currentColor;">AF12171124192D854A3FEC4917C34FF2385CC2E7</div><div class=t style="left:900.00px;top:487.95px;font-size:11px;line-height:11px;color:#cce0e9;transform:scaleX(0.919);transform-origin:0 0;">SHA256:</div><svg style='position:absolute;left:949px;top:487.26px' width=13 height=13 viewBox='0 0 13 13'>
<g fill=none stroke='#c3d9e3' stroke-width=1.05><path d='M4.4 5.2 H1.7 V11.5 H8.6 V8.9' stroke-linejoin=round /><rect x=5.3 y=1.8 width=6.3 height=6.3 rx=0.4 /></g></svg><div class=t style="left:966.00px;top:489.05px;font-size:11.8px;line-height:11.8px;color:#d3e5ec;font-family:'Liberation Mono',monospace;transform:scaleX(0.856);transform-origin:0 0;-webkit-text-stroke:0.2px currentColor;">545FB5D571CAB5D861D1259D4C31CD292795189AEE79041821C9D9221C…</div><div style='position:absolute;left:0;top:508px;width:1334px;height:67px;background:#3c8bab'></div><svg style='position:absolute;left:8px;top:523.20px' width=36 height=36 viewBox='8 190 36 36'><g fill='#cfe2ea'><path d='M18 202.7 A7.5 6.9 0 0 1 33 202.7 Z'/><rect x=18 y=203.8 width=15 height=11.8 rx=1.2 /><rect x=18 y=203.8 width=15 height=6 />
<rect x=14 y=203.2 width=3.1 height=10 rx=1.5 /><rect x=33.9 y=203.2 width=3.1 height=10 rx=1.5 /><rect x=20.9 y=212 width=3.1 height=8.9 rx=1.5 /><rect x=27 y=212 width=3.1 height=8.9 rx=1.5 /></g>
<g stroke='#cfe2ea' stroke-width=0.8 stroke-linecap=round><path d='M20.6 195.3 L21.9 197.6 M30.4 195.3 L29.1 197.6'/></g>
<g fill='#589db6'><circle cx=22.1 cy=199.6 r=0.75 /><circle cx=28.9 cy=199.6 r=0.75 /></g></svg><div class=t style="left:49.00px;top:526.40px;font-size:13px;line-height:13px;color:#d4e6ed;font-weight:700;letter-spacing:-0.067px;transform:scaleX(0.900);transform-origin:0 0;">Android 14 ARM 64 bit</div><div class=t style="left:49.00px;top:542.20px;font-size:13px;line-height:13px;color:#b5d3df;transform:scaleX(0.939);transform-origin:0 0;">July 10, 2025</div><svg style='position:absolute;left:260px;top:508.20px' width=60 height=60 viewBox='260 175 60 60'><path d='M273.9 208.6 L281.5 215.4 L297.7 198.2' fill=none stroke='#cfe2ea' stroke-width=5.2 stroke-linecap=butt stroke-linejoin=miter /></svg><svg style='position:absolute;left:317.1px;top:527.80px' width=27.4 height=27.4 viewBox='0 0 24 24'><path d='M6 2c-1.1 0-1.99.9-1.99 2L4 20c0 1.1.89 2 1.99 2H18c1.1 0 2-.9 2-2V8l-6-6H6zm7 7V3.5L18.5 9H13z' fill='#cfe2ea'/></svg><div style='position:absolute;left:353px;top:517.50px;width:191px;height:20.5px;background:#d9534f;border-radius:3px'></div><div class=t style="left:408.70px;top:521.39px;font-size:11px;line-height:11px;color:#ffffff;font-weight:700;letter-spacing:-0.190px;transform:scaleX(0.900);transform-origin:0 0;">Malicious activity</div><svg style='position:absolute;left:352px;top:546.20px' width='21' height='20' viewBox='0 0 21 20'>
<path d='M3 8.9 A7.6 7.6 0 0 1 18.2 8.9' fill='none' stroke='#cfe2ea' stroke-width='1.25' />
<path d='M2.3 8.9 H5.8 M15.4 8.9 H18.9' stroke='#cfe2ea' stroke-width='1.3' />
<path d='M10.6 1.4 V3.7' stroke='#cfe2ea' stroke-width='1.3' /><path d='M5.3 3.6 L6.7 5 M15.9 3.6 L14.5 5' stroke='#cfe2ea' stroke-width='1.1' />
<path d='M10.4 9.3 L14.7 11.7' stroke='#cfe2ea' stroke-width='1.25' stroke-linecap='round' />
<g fill='none' stroke='#cfe2ea' stroke-width='1.05'><path d='M4.2 14 H1.8 V18.3 H4.2'/><path d='M6 18.9 V14 H8.3 V16.4 H6'/><path d='M10.4 13.5 V18.3 H12.8 V13.5'/></g></svg><svg style='position:absolute;left:375.77px;top:546.93px' width='18.25' height='17.34' viewBox='-25 -26.5 50 47.5'>
<defs><mask id='bio4' maskUnits='userSpaceOnUse' x='-30' y='-30' width='60' height='60'><rect x='-30' y='-30' width='60' height='60' fill='white' /><circle cx='0.00' cy='-16.50' r='10' fill='black' /><circle cx='14.29' cy='8.25' r='10' fill='black' /><circle cx='-14.29' cy='8.25' r='10' fill='black' /><circle cx='0' cy='0' r='3' fill='black' /><line x1='0' y1='0' x2='0.00' y2='9.00' stroke='black' stroke-width='1.6' /><line x1='0' y1='0' x2='-7.79' y2='-4.50' stroke='black' stroke-width='1.6' /><line x1='0' y1='0' x2='7.79' y2='-4.50' stroke='black' stroke-width='1.6' /></mask>
<mask id='bio4r' maskUnits='userSpaceOnUse' x='-30' y='-30' width='60' height='60'><rect x='-30' y='-30' width='60' height='60' fill='white' /><circle cx='0' cy='0' r='3' fill='black' /><line x1='0' y1='0' x2='0.00' y2='9.00' stroke='black' stroke-width='1.6' /><line x1='0' y1='0' x2='-7.79' y2='-4.50' stroke='black' stroke-width='1.6' /><line x1='0' y1='0' x2='7.79' y2='-4.50' stroke='black' stroke-width='1.6' /></mask></defs>
<g fill='#cfe2ea' mask='url(#bio4)'><circle cx='0.00' cy='-11.00' r='15' /><circle cx='9.53' cy='5.50' r='15' /><circle cx='-9.53' cy='5.50' r='15' /></g>
<circle cx='0' cy='0' r='12.3' fill='none' stroke='#cfe2ea' stroke-width='2.6' mask='url(#bio4r)' /></svg><div class=t style="left:553.00px;top:515.20px;font-size:12.4px;line-height:12.4px;color:#d8e8ef;font-weight:700;letter-spacing:-0.110px;">0178782131396a7fe379de4a244a6bc7896646fdbf824fcb8…</div><div class=t style="left:553.00px;top:531.95px;font-size:11.4px;line-height:11.4px;color:#b3d3df;letter-spacing:-0.081px;transform:scaleX(0.900);transform-origin:0 0;">Android package (APK), with APK Signing Block</div><div style='position:absolute;left:553px;top:549.80px;width:38px;height:20.8px;background:#3f80a2;border-radius:3px'></div><div class=t style="left:561.90px;top:554.92px;font-size:11.2px;line-height:11.2px;color:#f0f6f9;-webkit-text-stroke:0.34px currentColor;transform:scaleX(0.918);transform-origin:0 0;">auto</div><div style='position:absolute;left:595.6px;top:549.80px;width:64.8px;height:20.8px;background:#3f80a2;border-radius:3px'></div><div class=t style="left:604.60px;top:554.92px;font-size:11.2px;line-height:11.2px;color:#f0f6f9;-webkit-text-stroke:0.34px currentColor;transform:scaleX(0.918);transform-origin:0 0;">crocodilus</div><div style='position:absolute;left:665.0px;top:549.80px;width:58.2px;height:20.8px;background:#3f80a2;border-radius:3px'></div><div class=t style="left:674.20px;top:554.92px;font-size:11.2px;line-height:11.2px;color:#f0f6f9;-webkit-text-stroke:0.34px currentColor;transform:scaleX(0.926);transform-origin:0 0;">telegram</div><div style='position:absolute;left:727.8px;top:549.80px;width:48.6px;height:20.8px;background:#3f80a2;border-radius:3px'></div><div class=t style="left:736.60px;top:554.92px;font-size:11.2px;line-height:11.2px;color:#f0f6f9;-webkit-text-stroke:0.34px currentColor;letter-spacing:-0.111px;transform:scaleX(0.900);transform-origin:0 0;">banker</div><div class=t style="left:899.00px;top:517.09px;font-size:11px;line-height:11px;color:#cce0e9;transform:scaleX(0.940);transform-origin:0 0;">MD5:</div><svg style='position:absolute;left:949px;top:516.4px' width=13 height=13 viewBox='0 0 13 13'>
<g fill=none stroke='#c3d9e3' stroke-width=1.05><path d='M4.4 5.2 H1.7 V11.5 H8.6 V8.9' stroke-linejoin=round /><rect x=5.3 y=1.8 width=6.3 height=6.3 rx=0.4 /></g></svg><div class=t style="left:966.00px;top:518.19px;font-size:11.8px;line-height:11.8px;color:#d3e5ec;font-family:'Liberation Mono',monospace;transform:scaleX(0.856);transform-origin:0 0;-webkit-text-stroke:0.2px currentColor;">69EB1428ABF218D0CE6753BB042CAD01</div><div class=t style="left:900.00px;top:535.84px;font-size:11px;line-height:11px;color:#cce0e9;transform:scaleX(0.903);transform-origin:0 0;">SHA1:</div><svg style='position:absolute;left:949px;top:535.15px' width=13 height=13 viewBox='0 0 13 13'>
<g fill=none stroke='#c3d9e3' stroke-width=1.05><path d='M4.4 5.2 H1.7 V11.5 H8.6 V8.9' stroke-linejoin=round /><rect x=5.3 y=1.8 width=6.3 height=6.3 rx=0.4 /></g></svg><div class=t style="left:966.00px;top:536.94px;font-size:11.8px;line-height:11.8px;color:#d3e5ec;font-family:'Liberation Mono',monospace;transform:scaleX(0.856);transform-origin:0 0;-webkit-text-stroke:0.2px currentColor;">EB1853C89F67D3365328E6F861E0147C4B438937</div><div class=t style="left:900.00px;top:554.59px;font-size:11px;line-height:11px;color:#cce0e9;transform:scaleX(0.919);transform-origin:0 0;">SHA256:</div><svg style='position:absolute;left:949px;top:553.9px' width=13 height=13 viewBox='0 0 13 13'>
<g fill=none stroke='#c3d9e3' stroke-width=1.05><path d='M4.4 5.2 H1.7 V11.5 H8.6 V8.9' stroke-linejoin=round /><rect x=5.3 y=1.8 width=6.3 height=6.3 rx=0.4 /></g></svg><div class=t style="left:966.00px;top:555.69px;font-size:11.8px;line-height:11.8px;color:#d3e5ec;font-family:'Liberation Mono',monospace;transform:scaleX(0.856);transform-origin:0 0;-webkit-text-stroke:0.2px currentColor;">0178782131396A7FE379DE4A244A6BC7896646FDBF824FCB8CB815EFE1…</div><div style='position:absolute;left:0;top:575px;width:1334px;height:66px;background:#589db6'></div><svg style='position:absolute;left:8px;top:589.84px' width=36 height=36 viewBox='8 190 36 36'><g fill='#cfe2ea'><path d='M18 202.7 A7.5 6.9 0 0 1 33 202.7 Z'/><rect x=18 y=203.8 width=15 height=11.8 rx=1.2 /><rect x=18 y=203.8 width=15 height=6 />
<rect x=14 y=203.2 width=3.1 height=10 rx=1.5 /><rect x=33.9 y=203.2 width=3.1 height=10 rx=1.5 /><rect x=20.9 y=212 width=3.1 height=8.9 rx=1.5 /><rect x=27 y=212 width=3.1 height=8.9 rx=1.5 /></g>
<g stroke='#cfe2ea' stroke-width=0.8 stroke-linecap=round><path d='M20.6 195.3 L21.9 197.6 M30.4 195.3 L29.1 197.6'/></g>
<g fill='#589db6'><circle cx=22.1 cy=199.6 r=0.75 /><circle cx=28.9 cy=199.6 r=0.75 /></g></svg><div class=t style="left:49.00px;top:593.04px;font-size:13px;line-height:13px;color:#d4e6ed;font-weight:700;letter-spacing:-0.067px;transform:scaleX(0.900);transform-origin:0 0;">Android 14 ARM 64 bit</div><div class=t style="left:49.00px;top:608.84px;font-size:13px;line-height:13px;color:#b5d3df;transform:scaleX(0.927);transform-origin:0 0;">June 06, 2025</div><svg style='position:absolute;left:260px;top:574.84px' width=60 height=60 viewBox='260 175 60 60'><path d='M273.9 208.6 L281.5 215.4 L297.7 198.2' fill=none stroke='#cfe2ea' stroke-width=5.2 stroke-linecap=butt stroke-linejoin=miter /></svg><svg style='position:absolute;left:317.1px;top:594.44px' width=27.4 height=27.4 viewBox='0 0 24 24'><path d='M6 2c-1.1 0-1.99.9-1.99 2L4 20c0 1.1.89 2 1.99 2H18c1.1 0 2-.9 2-2V8l-6-6H6zm7 7V3.5L18.5 9H13z' fill='#cfe2ea'/></svg><div style='position:absolute;left:353px;top:584.14px;width:191px;height:20.5px;background:#d9534f;border-radius:3px'></div><div class=t style="left:408.70px;top:588.03px;font-size:11px;line-height:11px;color:#ffffff;font-weight:700;letter-spacing:-0.190px;transform:scaleX(0.900);transform-origin:0 0;">Malicious activity</div><div class=t style="left:553.00px;top:581.84px;font-size:12.4px;line-height:12.4px;color:#d8e8ef;font-weight:700;letter-spacing:-0.145px;">801f956057aa608c7393b2fcca9b731c610c6bd5e14f4f3c1…</div><div class=t style="left:553.00px;top:598.59px;font-size:11.4px;line-height:11.4px;color:#b3d3df;letter-spacing:-0.081px;transform:scaleX(0.900);transform-origin:0 0;">Android package (APK), with APK Signing Block</div><div style='position:absolute;left:553px;top:616.44px;width:64.8px;height:20.8px;background:#3f80a2;border-radius:3px'></div><div class=t style="left:562.00px;top:621.56px;font-size:11.2px;line-height:11.2px;color:#f0f6f9;-webkit-text-stroke:0.34px currentColor;transform:scaleX(0.918);transform-origin:0 0;">crocodilus</div><div style='position:absolute;left:622.4px;top:616.44px;width:48.6px;height:20.8px;background:#3f80a2;border-radius:3px'></div><div class=t style="left:631.20px;top:621.56px;font-size:11.2px;line-height:11.2px;color:#f0f6f9;-webkit-text-stroke:0.34px currentColor;letter-spacing:-0.111px;transform:scaleX(0.900);transform-origin:0 0;">banker</div><div class=t style="left:899.00px;top:583.73px;font-size:11px;line-height:11px;color:#cce0e9;transform:scaleX(0.940);transform-origin:0 0;">MD5:</div><svg style='position:absolute;left:949px;top:583.04px' width=13 height=13 viewBox='0 0 13 13'>
<g fill=none stroke='#c3d9e3' stroke-width=1.05><path d='M4.4 5.2 H1.7 V11.5 H8.6 V8.9' stroke-linejoin=round /><rect x=5.3 y=1.8 width=6.3 height=6.3 rx=0.4 /></g></svg><div class=t style="left:966.00px;top:584.83px;font-size:11.8px;line-height:11.8px;color:#d3e5ec;font-family:'Liberation Mono',monospace;transform:scaleX(0.856);transform-origin:0 0;-webkit-text-stroke:0.2px currentColor;">E7551DA0D6E05CCE11D4BF3AE016BB15</div><div class=t style="left:900.00px;top:602.48px;font-size:11px;line-height:11px;color:#cce0e9;transform:scaleX(0.903);transform-origin:0 0;">SHA1:</div><svg style='position:absolute;left:949px;top:601.79px' width=13 height=13 viewBox='0 0 13 13'>
<g fill=none stroke='#c3d9e3' stroke-width=1.05><path d='M4.4 5.2 H1.7 V11.5 H8.6 V8.9' stroke-linejoin=round /><rect x=5.3 y=1.8 width=6.3 height=6.3 rx=0.4 /></g></svg><div class=t style="left:966.00px;top:603.58px;font-size:11.8px;line-height:11.8px;color:#d3e5ec;font-family:'Liberation Mono',monospace;transform:scaleX(0.856);transform-origin:0 0;-webkit-text-stroke:0.2px currentColor;">9E14D550C6B2AD3F1FF0A46C86B66AB1F262E2FE</div><div class=t style="left:900.00px;top:621.23px;font-size:11px;line-height:11px;color:#cce0e9;transform:scaleX(0.919);transform-origin:0 0;">SHA256:</div><svg style='position:absolute;left:949px;top:620.54px' width=13 height=13 viewBox='0 0 13 13'>
<g fill=none stroke='#c3d9e3' stroke-width=1.05><path d='M4.4 5.2 H1.7 V11.5 H8.6 V8.9' stroke-linejoin=round /><rect x=5.3 y=1.8 width=6.3 height=6.3 rx=0.4 /></g></svg><div class=t style="left:966.00px;top:622.33px;font-size:11.8px;line-height:11.8px;color:#d3e5ec;font-family:'Liberation Mono',monospace;transform:scaleX(0.856);transform-origin:0 0;-webkit-text-stroke:0.2px currentColor;">801F956057AA608C7393B2FCCA9B731C610C6BD5E14F4F3C1D64E8F211…</div><div style='position:absolute;left:0;top:641px;width:1334px;height:67px;background:#3c8bab'></div><svg style='position:absolute;left:8px;top:656.48px' width=36 height=36 viewBox='8 190 36 36'><g fill='#cfe2ea'><path d='M18 202.7 A7.5 6.9 0 0 1 33 202.7 Z'/><rect x=18 y=203.8 width=15 height=11.8 rx=1.2 /><rect x=18 y=203.8 width=15 height=6 />
<rect x=14 y=203.2 width=3.1 height=10 rx=1.5 /><rect x=33.9 y=203.2 width=3.1 height=10 rx=1.5 /><rect x=20.9 y=212 width=3.1 height=8.9 rx=1.5 /><rect x=27 y=212 width=3.1 height=8.9 rx=1.5 /></g>
<g stroke='#cfe2ea' stroke-width=0.8 stroke-linecap=round><path d='M20.6 195.3 L21.9 197.6 M30.4 195.3 L29.1 197.6'/></g>
<g fill='#589db6'><circle cx=22.1 cy=199.6 r=0.75 /><circle cx=28.9 cy=199.6 r=0.75 /></g></svg><div class=t style="left:49.00px;top:659.68px;font-size:13px;line-height:13px;color:#d4e6ed;font-weight:700;letter-spacing:-0.067px;transform:scaleX(0.900);transform-origin:0 0;">Android 14 ARM 64 bit</div><div class=t style="left:49.00px;top:675.48px;font-size:13px;line-height:13px;color:#b5d3df;transform:scaleX(0.927);transform-origin:0 0;">June 06, 2025</div><svg style='position:absolute;left:260px;top:641.48px' width=60 height=60 viewBox='260 175 60 60'><path d='M273.9 208.6 L281.5 215.4 L297.7 198.2' fill=none stroke='#cfe2ea' stroke-width=5.2 stroke-linecap=butt stroke-linejoin=miter /></svg><svg style='position:absolute;left:317.1px;top:661.08px' width=27.4 height=27.4 viewBox='0 0 24 24'><path d='M6 2c-1.1 0-1.99.9-1.99 2L4 20c0 1.1.89 2 1.99 2H18c1.1 0 2-.9 2-2V8l-6-6H6zm7 7V3.5L18.5 9H13z' fill='#cfe2ea'/></svg><div style='position:absolute;left:353px;top:650.78px;width:191px;height:20.5px;background:#d9534f;border-radius:3px'></div><div class=t style="left:408.70px;top:654.67px;font-size:11px;line-height:11px;color:#ffffff;font-weight:700;letter-spacing:-0.190px;transform:scaleX(0.900);transform-origin:0 0;">Malicious activity</div><svg style='position:absolute;left:352px;top:679.48px' width='21' height='20' viewBox='0 0 21 20'>
<path d='M3 8.9 A7.6 7.6 0 0 1 18.2 8.9' fill='none' stroke='#cfe2ea' stroke-width='1.25' />
<path d='M2.3 8.9 H5.8 M15.4 8.9 H18.9' stroke='#cfe2ea' stroke-width='1.3' />
<path d='M10.6 1.4 V3.7' stroke='#cfe2ea' stroke-width='1.3' /><path d='M5.3 3.6 L6.7 5 M15.9 3.6 L14.5 5' stroke='#cfe2ea' stroke-width='1.1' />
<path d='M10.4 9.3 L14.7 11.7' stroke='#cfe2ea' stroke-width='1.25' stroke-linecap='round' />
<g fill='none' stroke='#cfe2ea' stroke-width='1.05'><path d='M4.2 14 H1.8 V18.3 H4.2'/><path d='M6 18.9 V14 H8.3 V16.4 H6'/><path d='M10.4 13.5 V18.3 H12.8 V13.5'/></g></svg><div class=t style="left:553.00px;top:648.48px;font-size:12.4px;line-height:12.4px;color:#d8e8ef;font-weight:700;letter-spacing:-0.110px;">0178782131396a7fe379de4a244a6bc7896646fdbf824fcb8…</div><div class=t style="left:553.00px;top:665.23px;font-size:11.4px;line-height:11.4px;color:#b3d3df;letter-spacing:-0.081px;transform:scaleX(0.900);transform-origin:0 0;">Android package (APK), with APK Signing Block</div><div style='position:absolute;left:553px;top:683.08px;width:58.2px;height:20.8px;background:#3f80a2;border-radius:3px'></div><div class=t style="left:562.20px;top:688.20px;font-size:11.2px;line-height:11.2px;color:#f0f6f9;-webkit-text-stroke:0.34px currentColor;transform:scaleX(0.926);transform-origin:0 0;">telegram</div><div style='position:absolute;left:615.8px;top:683.08px;width:64.8px;height:20.8px;background:#3f80a2;border-radius:3px'></div><div class=t style="left:624.80px;top:688.20px;font-size:11.2px;line-height:11.2px;color:#f0f6f9;-webkit-text-stroke:0.34px currentColor;transform:scaleX(0.918);transform-origin:0 0;">crocodilus</div><div style='position:absolute;left:685.1999999999999px;top:683.08px;width:48.6px;height:20.8px;background:#3f80a2;border-radius:3px'></div><div class=t style="left:694.00px;top:688.20px;font-size:11.2px;line-height:11.2px;color:#f0f6f9;-webkit-text-stroke:0.34px currentColor;letter-spacing:-0.111px;transform:scaleX(0.900);transform-origin:0 0;">banker</div><div class=t style="left:899.00px;top:650.37px;font-size:11px;line-height:11px;color:#cce0e9;transform:scaleX(0.940);transform-origin:0 0;">MD5:</div><svg style='position:absolute;left:949px;top:649.68px' width=13 height=13 viewBox='0 0 13 13'>
<g fill=none stroke='#c3d9e3' stroke-width=1.05><path d='M4.4 5.2 H1.7 V11.5 H8.6 V8.9' stroke-linejoin=round /><rect x=5.3 y=1.8 width=6.3 height=6.3 rx=0.4 /></g></svg><div class=t style="left:966.00px;top:651.47px;font-size:11.8px;line-height:11.8px;color:#d3e5ec;font-family:'Liberation Mono',monospace;transform:scaleX(0.856);transform-origin:0 0;-webkit-text-stroke:0.2px currentColor;">69EB1428ABF218D0CE6753BB042CAD01</div><div class=t style="left:900.00px;top:669.12px;font-size:11px;line-height:11px;color:#cce0e9;transform:scaleX(0.903);transform-origin:0 0;">SHA1:</div><svg style='position:absolute;left:949px;top:668.43px' width=13 height=13 viewBox='0 0 13 13'>
<g fill=none stroke='#c3d9e3' stroke-width=1.05><path d='M4.4 5.2 H1.7 V11.5 H8.6 V8.9' stroke-linejoin=round /><rect x=5.3 y=1.8 width=6.3 height=6.3 rx=0.4 /></g></svg><div class=t style="left:966.00px;top:670.22px;font-size:11.8px;line-height:11.8px;color:#d3e5ec;font-family:'Liberation Mono',monospace;transform:scaleX(0.856);transform-origin:0 0;-webkit-text-stroke:0.2px currentColor;">EB1853C89F67D3365328E6F861E0147C4B438937</div><div class=t style="left:900.00px;top:687.87px;font-size:11px;line-height:11px;color:#cce0e9;transform:scaleX(0.919);transform-origin:0 0;">SHA256:</div><svg style='position:absolute;left:949px;top:687.18px' width=13 height=13 viewBox='0 0 13 13'>
<g fill=none stroke='#c3d9e3' stroke-width=1.05><path d='M4.4 5.2 H1.7 V11.5 H8.6 V8.9' stroke-linejoin=round /><rect x=5.3 y=1.8 width=6.3 height=6.3 rx=0.4 /></g></svg><div class=t style="left:966.00px;top:688.97px;font-size:11.8px;line-height:11.8px;color:#d3e5ec;font-family:'Liberation Mono',monospace;transform:scaleX(0.856);transform-origin:0 0;-webkit-text-stroke:0.2px currentColor;">0178782131396A7FE379DE4A244A6BC7896646FDBF824FCB8CB815EFE1…</div><div style='position:absolute;left:0;top:708px;width:1334px;height:66px;background:#477b8d'></div><svg style='position:absolute;left:8px;top:723.12px' width=36 height=36 viewBox='8 190 36 36'><g fill='#cfe2ea'><path d='M18 202.7 A7.5 6.9 0 0 1 33 202.7 Z'/><rect x=18 y=203.8 width=15 height=11.8 rx=1.2 /><rect x=18 y=203.8 width=15 height=6 />
<rect x=14 y=203.2 width=3.1 height=10 rx=1.5 /><rect x=33.9 y=203.2 width=3.1 height=10 rx=1.5 /><rect x=20.9 y=212 width=3.1 height=8.9 rx=1.5 /><rect x=27 y=212 width=3.1 height=8.9 rx=1.5 /></g>
<g stroke='#cfe2ea' stroke-width=0.8 stroke-linecap=round><path d='M20.6 195.3 L21.9 197.6 M30.4 195.3 L29.1 197.6'/></g>
<g fill='#589db6'><circle cx=22.1 cy=199.6 r=0.75 /><circle cx=28.9 cy=199.6 r=0.75 /></g></svg><div class=t style="left:49.00px;top:726.32px;font-size:13px;line-height:13px;color:#d4e6ed;font-weight:700;letter-spacing:-0.067px;transform:scaleX(0.900);transform-origin:0 0;">Android 14 ARM 64 bit</div><div class=t style="left:49.00px;top:742.12px;font-size:13px;line-height:13px;color:#b5d3df;transform:scaleX(0.927);transform-origin:0 0;">June 06, 2025</div><svg style='position:absolute;left:260px;top:708.12px' width=60 height=60 viewBox='260 175 60 60'><path d='M273.9 208.6 L281.5 215.4 L297.7 198.2' fill=none stroke='#cfe2ea' stroke-width=5.2 stroke-linecap=butt stroke-linejoin=miter /></svg><svg style='position:absolute;left:317.1px;top:727.72px' width=27.4 height=27.4 viewBox='0 0 24 24'><path d='M6 2c-1.1 0-1.99.9-1.99 2L4 20c0 1.1.89 2 1.99 2H18c1.1 0 2-.9 2-2V8l-6-6H6zm7 7V3.5L18.5 9H13z' fill='#cfe2ea'/></svg><div style='position:absolute;left:353px;top:717.42px;width:191px;height:20.5px;background:#d9534f;border-radius:3px'></div><div class=t style="left:408.70px;top:721.31px;font-size:11px;line-height:11px;color:#ffffff;font-weight:700;letter-spacing:-0.190px;transform:scaleX(0.900);transform-origin:0 0;">Malicious activity</div><svg style='position:absolute;left:352.77px;top:746.85px' width='18.25' height='17.34' viewBox='-25 -26.5 50 47.5'>
<defs><mask id='bio5' maskUnits='userSpaceOnUse' x='-30' y='-30' width='60' height='60'><rect x='-30' y='-30' width='60' height='60' fill='white' /><circle cx='0.00' cy='-16.50' r='10' fill='black' /><circle cx='14.29' cy='8.25' r='10' fill='black' /><circle cx='-14.29' cy='8.25' r='10' fill='black' /><circle cx='0' cy='0' r='3' fill='black' /><line x1='0' y1='0' x2='0.00' y2='9.00' stroke='black' stroke-width='1.6' /><line x1='0' y1='0' x2='-7.79' y2='-4.50' stroke='black' stroke-width='1.6' /><line x1='0' y1='0' x2='7.79' y2='-4.50' stroke='black' stroke-width='1.6' /></mask>
<mask id='bio5r' maskUnits='userSpaceOnUse' x='-30' y='-30' width='60' height='60'><rect x='-30' y='-30' width='60' height='60' fill='white' /><circle cx='0' cy='0' r='3' fill='black' /><line x1='0' y1='0' x2='0.00' y2='9.00' stroke='black' stroke-width='1.6' /><line x1='0' y1='0' x2='-7.79' y2='-4.50' stroke='black' stroke-width='1.6' /><line x1='0' y1='0' x2='7.79' y2='-4.50' stroke='black' stroke-width='1.6' /></mask></defs>
<g fill='#cfe2ea' mask='url(#bio5)'><circle cx='0.00' cy='-11.00' r='15' /><circle cx='9.53' cy='5.50' r='15' /><circle cx='-9.53' cy='5.50' r='15' /></g>
<circle cx='0' cy='0' r='12.3' fill='none' stroke='#cfe2ea' stroke-width='2.6' mask='url(#bio5r)' /></svg><div class=t style="left:553.00px;top:715.12px;font-size:12.4px;line-height:12.4px;color:#d8e8ef;font-weight:700;letter-spacing:-0.110px;">6d55d90d021b0980528f56d040e78fa7b85a96f5c244e23f3…</div><div class=t style="left:553.00px;top:731.87px;font-size:11.4px;line-height:11.4px;color:#b3d3df;letter-spacing:-0.081px;transform:scaleX(0.900);transform-origin:0 0;">Android package (APK), with APK Signing Block</div><div style='position:absolute;left:553px;top:749.72px;width:38px;height:20.8px;background:#3f80a2;border-radius:3px'></div><div class=t style="left:561.90px;top:754.84px;font-size:11.2px;line-height:11.2px;color:#f0f6f9;-webkit-text-stroke:0.34px currentColor;transform:scaleX(0.918);transform-origin:0 0;">auto</div><div style='position:absolute;left:595.6px;top:749.72px;width:64.8px;height:20.8px;background:#3f80a2;border-radius:3px'></div><div class=t style="left:604.60px;top:754.84px;font-size:11.2px;line-height:11.2px;color:#f0f6f9;-webkit-text-stroke:0.34px currentColor;transform:scaleX(0.918);transform-origin:0 0;">crocodilus</div><div style='position:absolute;left:665.0px;top:749.72px;width:48.6px;height:20.8px;background:#3f80a2;border-radius:3px'></div><div class=t style="left:673.80px;top:754.84px;font-size:11.2px;line-height:11.2px;color:#f0f6f9;-webkit-text-stroke:0.34px currentColor;letter-spacing:-0.111px;transform:scaleX(0.900);transform-origin:0 0;">banker</div><div class=t style="left:899.00px;top:717.01px;font-size:11px;line-height:11px;color:#cce0e9;transform:scaleX(0.940);transform-origin:0 0;">MD5:</div><svg style='position:absolute;left:949px;top:716.32px' width=13 height=13 viewBox='0 0 13 13'>
<g fill=none stroke='#c3d9e3' stroke-width=1.05><path d='M4.4 5.2 H1.7 V11.5 H8.6 V8.9' stroke-linejoin=round /><rect x=5.3 y=1.8 width=6.3 height=6.3 rx=0.4 /></g></svg><div class=t style="left:966.00px;top:718.11px;font-size:11.8px;line-height:11.8px;color:#d3e5ec;font-family:'Liberation Mono',monospace;transform:scaleX(0.856);transform-origin:0 0;-webkit-text-stroke:0.2px currentColor;">F6F589D1A0A189ADED4D008B671BE0DB</div><div class=t style="left:900.00px;top:735.76px;font-size:11px;line-height:11px;color:#cce0e9;transform:scaleX(0.903);transform-origin:0 0;">SHA1:</div><svg style='position:absolute;left:949px;top:735.07px' width=13 height=13 viewBox='0 0 13 13'>
<g fill=none stroke='#c3d9e3' stroke-width=1.05><path d='M4.4 5.2 H1.7 V11.5 H8.6 V8.9' stroke-linejoin=round /><rect x=5.3 y=1.8 width=6.3 height=6.3 rx=0.4 /></g></svg><div class=t style="left:966.00px;top:736.86px;font-size:11.8px;line-height:11.8px;color:#d3e5ec;font-family:'Liberation Mono',monospace;transform:scaleX(0.856);transform-origin:0 0;-webkit-text-stroke:0.2px currentColor;">F425A592DF7FE61A03673A48FDA56E55F9D6165C</div><div class=t style="left:900.00px;top:754.51px;font-size:11px;line-height:11px;color:#cce0e9;transform:scaleX(0.919);transform-origin:0 0;">SHA256:</div><svg style='position:absolute;left:949px;top:753.82px' width=13 height=13 viewBox='0 0 13 13'>
<g fill=none stroke='#c3d9e3' stroke-width=1.05><path d='M4.4 5.2 H1.7 V11.5 H8.6 V8.9' stroke-linejoin=round /><rect x=5.3 y=1.8 width=6.3 height=6.3 rx=0.4 /></g></svg><div class=t style="left:966.00px;top:755.61px;font-size:11.8px;line-height:11.8px;color:#d3e5ec;font-family:'Liberation Mono',monospace;transform:scaleX(0.856);transform-origin:0 0;-webkit-text-stroke:0.2px currentColor;">6D55D90D021B0980528F56D040E78FA7B85A96F5C244E23F330F24C8E8…</div><div style='position:absolute;left:0;top:774px;width:1334px;height:5px;background:#3c8bab'></div></div></body></html>
